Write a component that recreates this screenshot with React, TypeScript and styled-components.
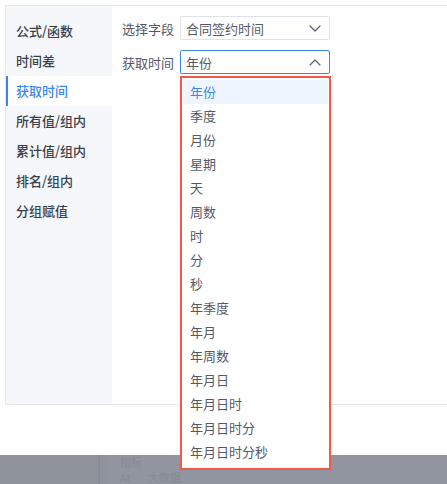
import React from 'react';
import styled, { createGlobalStyle } from 'styled-components';

const GlobalStyle = createGlobalStyle`
  body {
    margin: 0;
    background: #fff;
    font-family: "Noto Sans CJK SC", "Noto Sans", sans-serif;
  }
`;

const MENU = ['公式/函数', '时间差', '获取时间', '所有值/组内', '累计值/组内', '排名/组内', '分组赋值'];
const OPTIONS = [
  '年份', '季度', '月份', '星期', '天', '周数', '时', '分', '秒',
  '年季度', '年月', '年周数', '年月日', '年月日时', '年月日时分', '年月日时分秒',
];

const Chevron = ({ up }: { up?: boolean }) => (
  <svg width="12" height="7" viewBox="0 0 12 7" fill="none">
    <path
      d={up ? 'M1 6L6 1L11 6' : 'M1 1L6 6L11 1'}
      stroke="#5b6170"
      strokeWidth="1.2"
      strokeLinecap="round"
      strokeLinejoin="round"
    />
  </svg>
);

export default function App() {
  return (
    <>
      <GlobalStyle />
      <Page>
        <Panel>
          <Sidebar>
            {MENU.map((m) => (
              <MenuItem key={m} $active={m === '获取时间'}>
                {m}
              </MenuItem>
            ))}
          </Sidebar>
          <Content>
            <Row>
              <Label>选择字段</Label>
              <Select>
                <span>合同签约时间</span>
                <Chevron />
              </Select>
            </Row>
            <Row>
              <Label>获取时间</Label>
              <Select $open>
                <span>年份</span>
                <Chevron up />
              </Select>
            </Row>
          </Content>
        </Panel>
        <Gap />
        <Mask>
          <MaskSide />
          <MaskDivider />
          <MaskMain>
            <Faint>指标</Faint>
            <Faint>At&nbsp;&nbsp;&nbsp;&nbsp;&nbsp;&nbsp;&nbsp;大数据</Faint>
          </MaskMain>
        </Mask>
        <Dropdown>
          {OPTIONS.map((o, i) => (
            <Option key={o} $selected={i === 0}>
              {o}
            </Option>
          ))}
        </Dropdown>
      </Page>
    </>
  );
}

const Page = styled.div`
  position: relative;
  height: 484px;
  display: flex;
  flex-direction: column;
  overflow: hidden;
`;

const Panel = styled.div`
  margin: 5px 0 0 5px;
  height: 398px;
  border: 1px solid #e6e8ec;
  border-right: none;
  display: flex;
`;

const Sidebar = styled.div`
  width: 106px;
  background: #f5f7fa;
  padding-top: 10px;
`;

const MenuItem = styled.div<{ $active?: boolean }>`
  height: 30px;
  line-height: 30px;
  padding-left: ${(p) => (p.$active ? 8 : 10)}px;
  font-size: 13px;
  font-weight: 500;
  color: ${(p) => (p.$active ? '#3b86f2' : '#3a3f4b')};
  background: ${(p) => (p.$active ? '#fff' : 'transparent')};
  border-left: ${(p) => (p.$active ? '2px solid #3b86f2' : 'none')};
`;

const Content = styled.div`
  flex: 1;
  padding: 10px 0 0 10px;
  display: flex;
  flex-direction: column;
  gap: 10px;
`;

const Row = styled.div`
  display: flex;
  align-items: center;
`;

const Label = styled.div`
  width: 58px;
  font-size: 13px;
  color: #535967;
`;

const Select = styled.div<{ $open?: boolean }>`
  box-sizing: border-box;
  width: 150px;
  height: 24px;
  border: 1px solid ${(p) => (p.$open ? '#3d87f0' : '#dfe2e8')};
  border-radius: 2px;
  padding: 0 8px 0 5px;
  display: flex;
  align-items: center;
  justify-content: space-between;
  font-size: 13px;
  color: #535967;
`;

const Gap = styled.div`
  height: 50px;
`;

const Mask = styled.div`
  flex: 1;
  display: flex;
  background: #8f939c;
`;

const MaskSide = styled.div`
  width: 98px;
`;

const MaskDivider = styled.div`
  width: 2px;
  background: #878b94;
`;

const MaskMain = styled.div`
  flex: 1;
  margin-left: 8px;
  background: #9195a0;
  padding: 1px 0 0 12px;
  display: flex;
  flex-direction: column;
  gap: 3px;
`;

const Faint = styled.div`
  font-size: 11px;
  line-height: 12px;
  color: #868a94;
`;

const Dropdown = styled.div`
  position: absolute;
  left: 180px;
  top: 76px;
  width: 151px;
  box-sizing: border-box;
  border: 2px solid #f4574b;
  background: #fff;
  padding: 2px 1px 4px;
`;

const Option = styled.div<{ $selected?: boolean }>`
  height: 24px;
  line-height: 23px;
  padding-left: 7px;
  font-size: 13px;
  color: ${(p) => (p.$selected ? '#3b86f2' : '#535967')};
  background: ${(p) => (p.$selected ? '#eff5fe' : 'transparent')};
`;
